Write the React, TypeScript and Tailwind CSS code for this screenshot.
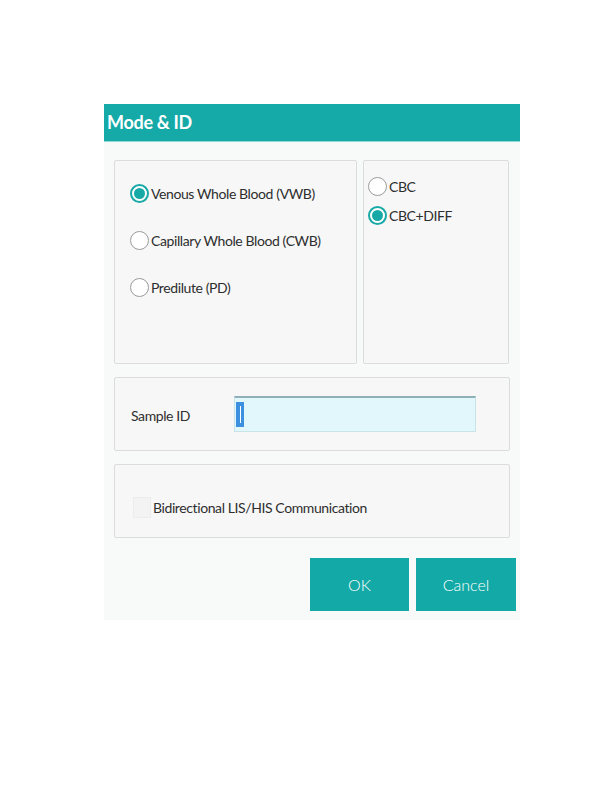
import React from "react";

function Radio({ checked, label }: { checked?: boolean; label: string }) {
  return (
    <div className="flex items-center">
      {checked ? (
        <div className="w-[19px] h-[19px] rounded-full border-2 border-[#17a9a6] bg-white flex items-center justify-center shrink-0">
          <div className="w-[11px] h-[11px] rounded-full bg-[#17a9a6]" />
        </div>
      ) : (
        <div className="w-[19px] h-[19px] rounded-full border-[1.5px] border-[#9a9a9a] bg-white shrink-0" />
      )}
      <span className="ml-[2px] text-[14px] leading-none text-[#2e2e2e] tracking-[-0.4px]">{label}</span>
    </div>
  );
}

export default function App() {
  return (
    <div className="w-[613px] h-[788px] bg-white pt-[104px] pl-[104px]" style={{ fontFamily: "Lato, 'Open Sans', sans-serif" }}>
      <div className="w-[416px] bg-[#f8f9f9] flex flex-col">
        <div className="h-[38px] bg-[#15a9a7] flex items-center pl-[3px] border-b border-[#8fd9d6]">
          <span className="text-white font-bold text-[18px] tracking-[-0.3px]">Mode &amp; ID</span>
        </div>
        <div className="px-[10px] pt-[18px] pb-[9px] flex flex-col">
          <div className="flex gap-[6px] h-[204px]">
            <div className="w-[243px] border border-[#dcdcdc] rounded-[2px] bg-[#f7f7f7] pl-[15px] pt-[23px] flex flex-col gap-[28px]">
              <Radio checked label="Venous Whole Blood (VWB)" />
              <Radio label="Capillary Whole Blood (CWB)" />
              <Radio label="Predilute (PD)" />
            </div>
            <div className="w-[146px] border border-[#dcdcdc] rounded-[2px] bg-[#f7f7f7] pl-[4px] pt-[16px] flex flex-col gap-[10px]">
              <Radio label="CBC" />
              <Radio checked label="CBC+DIFF" />
            </div>
          </div>
          <div className="mt-[13px] h-[74px] border border-[#dcdcdc] rounded-[2px] bg-[#f7f7f7] flex items-center pl-[16px]">
            <span className="w-[103px] pt-[3px] text-[14px] text-[#2e2e2e] tracking-[-0.4px]">Sample ID</span>
            <div className="w-[242px] h-[36px] bg-[#e1f7fb] border border-[#c9e3ea] border-t-2 border-t-[#8fb0b8] flex items-center pl-[1px]">
              <div className="w-[8px] h-[25px] bg-[#3d8fe0] flex items-center justify-center">
                <div className="w-[1px] h-[17px] bg-white" />
              </div>
            </div>
          </div>
          <div className="mt-[13px] h-[74px] border border-[#dcdcdc] rounded-[2px] bg-[#f7f7f7] flex items-center pl-[18px] pt-[12px]">
            <div className="w-[18px] h-[21px] border border-[#ececec] bg-[#f3f3f3]" />
            <span className="ml-[2px] text-[14px] text-[#2e2e2e] tracking-[-0.4px]">Bidirectional LIS/HIS Communication</span>
          </div>
          <div className="mt-[20px] flex justify-end gap-[7px] -mr-[6px]">
            <button className="w-[99px] h-[53px] bg-[#13a9a6] text-white text-[16px] font-light flex items-center justify-center">OK</button>
            <button className="w-[100px] h-[53px] bg-[#13a9a6] text-white text-[16px] font-light flex items-center justify-center">Cancel</button>
          </div>
        </div>
      </div>
    </div>
  );
}
